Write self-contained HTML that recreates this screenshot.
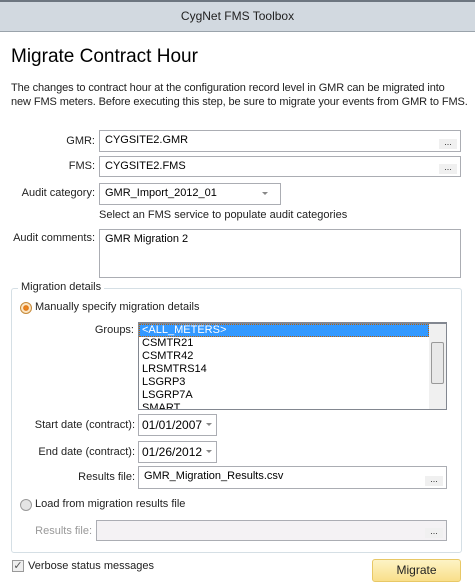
<!DOCTYPE html>
<html><head><style>
*{box-sizing:border-box;margin:0;padding:0}
body{width:475px;height:585px;background:#fff;font-family:"Liberation Sans",sans-serif;font-size:11px;color:#000;position:relative;overflow:hidden}
.a{position:absolute}
.tb{left:0;top:0;width:475px;height:32px;background:#d2d9e0;border-top:2px solid #6d7680;border-bottom:1px solid #9aa3ab;text-align:center;line-height:29px;font-size:12px;color:#222}
.lbl{text-align:right;white-space:nowrap;color:#222}
.box{border:1px solid #abadb3;background:#fff;padding:3px 5px;white-space:nowrap}
.dots{position:absolute;right:3px;bottom:2px;width:18px;height:10px;background:#f0f0f0;font-size:9px;line-height:6px;text-align:center;color:#333}
.arr{position:absolute;right:4px;top:8px;width:0;height:0;border-left:3px solid transparent;border-right:3px solid transparent;border-top:3px solid #888}
</style></head><body>
<div class="a tb">CygNet FMS Toolbox</div>
<div class="a" style="left:11px;top:46px;font-size:19px">Migrate Contract Hour</div>
<div class="a" style="left:11px;top:81px;line-height:14px;color:#222;white-space:nowrap;font-size:11px;letter-spacing:-0.1px">The changes to contract hour at the configuration record level in GMR can be migrated into<br>new FMS meters. Before executing this step, be sure to migrate your events from GMR to FMS.</div>

<div class="a lbl" style="right:380px;top:135px">GMR:</div>
<div class="a box" style="left:99px;top:130px;width:362px;height:22px">CYGSITE2.GMR<div class="dots">...</div></div>
<div class="a lbl" style="right:380px;top:160px">FMS:</div>
<div class="a box" style="left:99px;top:156px;width:362px;height:21px">CYGSITE2.FMS<div class="dots">...</div></div>
<div class="a lbl" style="right:380px;top:187px">Audit category:</div>
<div class="a box" style="left:99px;top:183px;width:182px;height:22px">GMR_Import_2012_01<div class="arr" style="right:12px"></div></div>
<div class="a" style="left:99px;top:209px;color:#222">Select an FMS service to populate audit categories</div>
<div class="a lbl" style="right:380px;top:232px">Audit comments:</div>
<div class="a box" style="left:99px;top:229px;width:362px;height:49px">GMR Migration 2</div>

<div class="a" style="left:11px;top:288px;width:451px;height:265px;border:1px solid #d5dfe5;border-radius:3px"></div>
<div class="a" style="left:18px;top:281px;background:#fff;padding:0 3px;color:#222">Migration details</div>
<div class="a" style="left:20px;top:302px;width:12px;height:12px;border-radius:50%;border:1px solid #c58a3a;background:radial-gradient(circle,#f08b1c 0,#e0781a 35%,#fde9c8 45%,#f5d9b0 100%)"></div>
<div class="a" style="left:35px;top:301px;color:#222">Manually specify migration details</div>
<div class="a lbl" style="right:341px;top:324px">Groups:</div>
<div class="a" style="left:138px;top:322px;width:309px;height:88px;border:1px solid #828790;border-top:2px solid #828790;overflow:hidden;background:#fff">
<div style="background:#3399ff;color:#fff;height:13px;line-height:13px;padding-left:3px;width:290px;outline:1px dotted #c06000;outline-offset:-1px">&lt;ALL_METERS&gt;</div>
<div style="line-height:13px;padding-left:3px">CSMTR21<br>CSMTR42<br>LRSMTRS14<br>LSGRP3<br>LSGRP7A<br>SMART</div>
<div class="a" style="right:0;top:0;width:17px;height:86px;background:#f0f0f0"><div class="a" style="left:2px;top:18px;width:13px;height:42px;border:1px solid #999;border-radius:2px;background:#e8e8e8"></div></div>
</div>
<div class="a lbl" style="right:340px;top:419px">Start date (contract):</div>
<div class="a box" style="left:138px;top:414px;width:79px;height:22px;padding:3px 3px;font-size:12px">01/01/2007<div class="arr"></div></div>
<div class="a lbl" style="right:340px;top:446px">End date (contract):</div>
<div class="a box" style="left:138px;top:441px;width:79px;height:22px;padding:3px 3px;font-size:12px">01/26/2012<div class="arr"></div></div>
<div class="a lbl" style="right:340px;top:471px">Results file:</div>
<div class="a box" style="left:138px;top:466px;width:309px;height:23px">GMR_Migration_Results.csv<div class="dots">...</div></div>

<div class="a" style="left:20px;top:499px;width:12px;height:12px;border-radius:50%;border:1px solid #999;background:#e4e4e4"></div>
<div class="a" style="left:35px;top:498px;color:#222">Load from migration results file</div>
<div class="a lbl" style="right:383px;top:525px;color:#999">Results file:</div>
<div class="a box" style="left:96px;top:520px;width:351px;height:21px;background:#f4f2f4"><div class="dots">...</div></div>

<div class="a" style="left:12px;top:560px;width:12px;height:12px;border:1px solid #999;background:#eee;font-size:11px;line-height:10px;text-align:center;color:#555">✓</div>
<div class="a" style="left:28px;top:560px;color:#222">Verbose status messages</div>
<div class="a" style="left:372px;top:559px;width:89px;height:23px;border:1px solid #e8c866;border-radius:3px;background:linear-gradient(#fdf3c5,#f9df8a);text-align:center;line-height:21px;color:#222;font-size:12px">Migrate</div>
</body></html>
